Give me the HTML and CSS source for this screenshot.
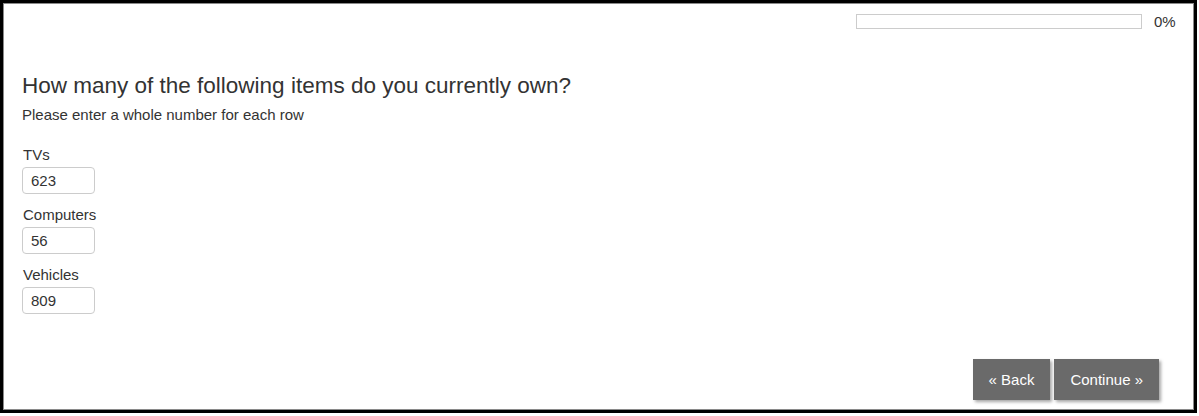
FILE: index.html
```html
<!DOCTYPE html>
<html lang="en">
<head>
<meta charset="utf-8">
<title>Survey</title>
<link rel="stylesheet" href="styles.css">
</head>
<body>
<div class="frame">
  <div class="progress-row">
    <div class="progress-bar"><div class="progress-fill"></div></div>
    <span class="progress-label">0%</span>
  </div>
  <h1 class="question">How many of the following items do you currently own?</h1>
  <p class="instructions">Please enter a whole number for each row</p>
  <div class="fields">
    <div class="field">
      <label class="field-label" for="tvs">TVs</label>
      <input class="field-input" id="tvs" type="text" value="623">
    </div>
    <div class="field">
      <label class="field-label" for="computers">Computers</label>
      <input class="field-input" id="computers" type="text" value="56">
    </div>
    <div class="field">
      <label class="field-label" for="vehicles">Vehicles</label>
      <input class="field-input" id="vehicles" type="text" value="809">
    </div>
  </div>
  <div class="nav">
    <button class="btn" type="button">&laquo; Back</button>
    <button class="btn" type="button">Continue &raquo;</button>
  </div>
</div>
</body>
</html>
```

FILE: styles.css
```css
html, body {
  margin: 0;
  padding: 0;
  background: #fff;
}

body {
  font-family: "Liberation Sans", Arial, Helvetica, sans-serif;
  color: #333;
  font-size: 15px;
}

.frame {
  box-sizing: border-box;
  width: 1197px;
  height: 413px;
  border: 3px solid #000;
  box-shadow: inset 0 0 0 1px #8a8a8a;
  padding: 0 34px 0 19px;
  display: flex;
  flex-direction: column;
}

.progress-row {
  display: flex;
  justify-content: flex-end;
  align-items: center;
  margin-top: 11px;
  margin-right: -16px;
  height: 15px;
}

.progress-bar {
  box-sizing: border-box;
  width: 286px;
  height: 15px;
  border: 1px solid #ccc;
  background: #fff;
}

.progress-fill {
  width: 0;
  height: 100%;
  background: #5a8dd6;
}

.progress-label {
  margin-left: 12px;
  font-size: 15px;
  line-height: 15px;
  color: #333;
  width: 22px;
}

.question {
  margin: 45px 0 0;
  font-size: 22.5px;
  line-height: 24px;
  font-weight: normal;
  color: #333;
}

.instructions {
  margin: 7px 0 0;
  font-size: 15px;
  line-height: 20px;
}

.fields {
  margin-top: 20px;
  display: flex;
  flex-direction: column;
  align-items: flex-start;
  gap: 11px;
}

.field {
  display: flex;
  flex-direction: column;
  align-items: flex-start;
  gap: 2px;
}

.field-label {
  font-size: 15px;
  line-height: 20px;
  padding-left: 1px;
}

.field-input {
  box-sizing: border-box;
  width: 73px;
  height: 27px;
  margin: 0;
  padding: 0 8px;
  border: 1px solid #ccc;
  border-radius: 4px;
  font-family: inherit;
  font-size: 15px;
  color: #333;
  background: #fff;
}

.nav {
  margin-top: auto;
  margin-bottom: 10px;
  margin-right: 1px;
  display: flex;
  justify-content: flex-end;
  gap: 4px;
}

.btn {
  box-sizing: border-box;
  height: 41px;
  padding: 0 16px;
  border: none;
  background: #6a6a6a;
  color: #fff;
  font-family: inherit;
  font-size: 15px;
  box-shadow: 2px 2px 3px rgba(0, 0, 0, 0.35);
  cursor: pointer;
}
```
